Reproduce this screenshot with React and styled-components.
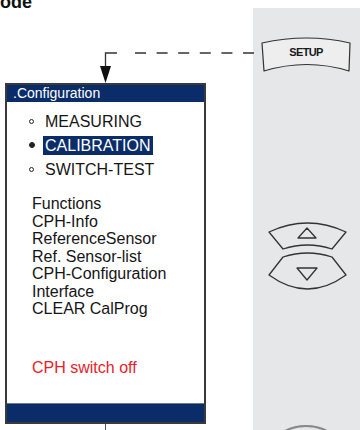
import React from "react";
import styled, { createGlobalStyle } from "styled-components";

const GlobalStyle = createGlobalStyle`
  html, body {
    margin: 0;
    padding: 0;
    background: #fff;
  }
  body {
    font-family: "Liberation Sans", Arial, sans-serif;
  }
`;

const BLUE = "#0a2d6a";

const Page = styled.div`
  position: relative;
  display: flex;
  width: 360px;
  height: 430px;
  overflow: hidden;
  background: #fff;
`;

const LeftCol = styled.div`
  width: 253px;
  display: flex;
  flex-direction: column;
`;

// only the lower part of the heading shows at the top edge
const Heading = styled.h1`
  margin: -8px 0 0 -15px;
  font-size: 18px;
  line-height: 20px;
  font-weight: bold;
  color: #111;
  white-space: nowrap;
`;

const Connector = styled.svg`
  position: absolute;
  left: 0;
  top: 0;
  pointer-events: none;
`;

const Screen = styled.div`
  margin: 71px 0 0 5px;
  width: 201px;
  height: 341px;
  box-sizing: border-box;
  border: 2px solid #3a3a3a;
  display: flex;
  flex-direction: column;
  background: #fff;
`;

const TitleBar = styled.div`
  height: 17px;
  line-height: 17px;
  padding-left: 6px;
  background: ${BLUE};
  color: #fff;
  font-size: 14px;
`;

const ScreenBody = styled.div`
  flex: 1;
  padding-top: 7px;
  color: #151515;
  font-size: 16px;
`;

const OptionList = styled.div`
  padding-left: 22px;
`;

const Option = styled.div`
  display: flex;
  align-items: center;
  height: 24px;
`;

const Bullet = styled.span`
  width: 5px;
  height: 5px;
  box-sizing: border-box;
  border-radius: 50%;
  border: 1px solid #222;
  background: ${(p) => (p.$on ? "#222" : "transparent")};
  margin-right: 9px;
  ${(p) => p.$on && "width: 6px; height: 6px; margin-right: 8px;"}
`;

const OptionLabel = styled.span`
  padding: 0 2px;
  line-height: 19px;
  background: ${(p) => (p.$on ? BLUE : "transparent")};
  color: ${(p) => (p.$on ? "#fff" : "#151515")};
`;

const MenuList = styled.div`
  margin-top: 14px;
  padding-left: 25px;
  line-height: 17.5px;
`;

const Warning = styled.div`
  margin-top: 40px;
  padding-left: 25px;
  line-height: 20px;
  color: #e8212b;
`;

const BottomBar = styled.div`
  height: 18px;
  border-top: 1px solid #777;
  background: ${BLUE};
`;

const Stub = styled.div`
  width: 1px;
  height: 6px;
  margin-left: 105px;
  background: #555;
`;

const Panel = styled.div`
  flex: 1;
  margin-top: 8px;
  background: #e6e7e8;
  display: flex;
  flex-direction: column;
  align-items: flex-start;
`;

const SetupKey = styled.svg`
  margin: 28px 0 0 6px;
  flex-shrink: 0;
`;

const ArrowKeys = styled.svg`
  margin: 145px 0 0 13px;
  flex-shrink: 0;
`;

const Dial = styled.svg`
  margin: 131px 0 0 3px;
  flex-shrink: 0;
`;

const options = [
  { label: "MEASURING", on: false },
  { label: "CALIBRATION", on: true },
  { label: "SWITCH-TEST", on: false },
];

const menu = [
  "Functions",
  "CPH-Info",
  "ReferenceSensor",
  "Ref. Sensor-list",
  "CPH-Configuration",
  "Interface",
  "CLEAR CalProg",
];

export default function App() {
  return (
    <Page>
      <GlobalStyle />
      <LeftCol>
        <Heading>Mode</Heading>
        <Screen>
          <TitleBar>.Configuration</TitleBar>
          <ScreenBody>
            <OptionList>
              {options.map((o) => (
                <Option key={o.label}>
                  <Bullet $on={o.on} />
                  <OptionLabel $on={o.on}>{o.label}</OptionLabel>
                </Option>
              ))}
            </OptionList>
            <MenuList>
              {menu.map((m) => (
                <div key={m}>{m}</div>
              ))}
            </MenuList>
            <Warning>CPH switch off</Warning>
          </ScreenBody>
          <BottomBar />
        </Screen>
        <Stub />
      </LeftCol>

      <Panel>
        <SetupKey width="94" height="38" viewBox="0 0 94 38">
          <path
            d="M3 7 Q48 -3 91 7 L90 35 Q48 22 5 35 Z"
            fill="#eeeeef"
            stroke="#333"
            strokeWidth="1.2"
            strokeLinejoin="round"
          />
          <text
            x="47"
            y="19.5"
            textAnchor="middle"
            fontFamily="'Liberation Sans', Arial, sans-serif"
            fontWeight="bold"
            fontSize="11"
            letterSpacing="-0.6"
            fill="#1a1a1a"
          >
            SETUP
          </text>
        </SetupKey>

        <ArrowKeys width="82" height="74" viewBox="0 0 82 74">
          <g fill="none" stroke="#333" strokeWidth="1.3" strokeLinejoin="round">
            <path d="M3 13 Q41.5 -5 80 13 L66 30 Q41.5 22 17 30 Z" />
            <path d="M17 38 Q41.5 30 66 38 L80 56 Q41.5 84 3 56 Z" />
            <path d="M41 9 L50 19 L32 19 Z" />
            <path d="M31 49 L51 49 L41 61 Z" />
          </g>
        </ArrowKeys>

        <Dial width="100" height="6" viewBox="0 0 100 6">
          <circle cx="50" cy="48" r="46" fill="none" stroke="#888" strokeWidth="2" />
        </Dial>
      </Panel>

      <Connector width="270" height="90" viewBox="0 0 270 90">
        <path d="M117 53 H105.5 V67" fill="none" stroke="#333" strokeWidth="1.3" />
        <path
          d="M135 53 H260"
          fill="none"
          stroke="#333"
          strokeWidth="1.3"
          strokeDasharray="11 10.6"
        />
        <path d="M100 66 L111 66 L105.5 83 Z" fill="#111" />
      </Connector>
    </Page>
  );
}
